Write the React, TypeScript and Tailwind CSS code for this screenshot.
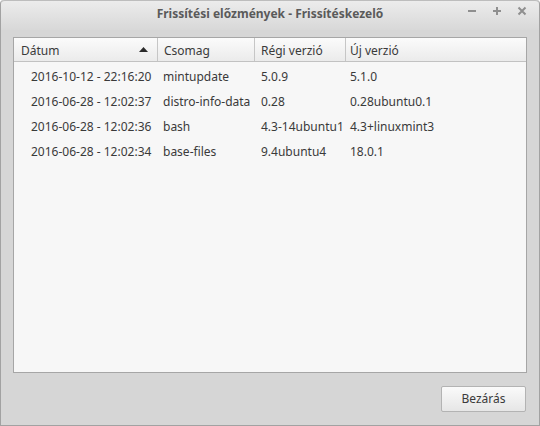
import React from "react";

const rows = [
  ["2016-10-12 - 22:16:20", "mintupdate", "5.0.9", "5.1.0"],
  ["2016-06-28 - 12:02:37", "distro-info-data", "0.28", "0.28ubuntu0.1"],
  ["2016-06-28 - 12:02:36", "bash", "4.3-14ubuntu1", "4.3+linuxmint3"],
  ["2016-06-28 - 12:02:34", "base-files", "9.4ubuntu4", "18.0.1"],
];

export default function App() {
  return (
    <div
      className="w-[540px] h-[426px] flex flex-col bg-[#d6d6d6] border border-t-0 border-[#a2a2a2] rounded-t-[4px] overflow-hidden text-[12px] text-[#3a3a3a]"
      style={{ fontFamily: '"Noto Sans", "Open Sans", sans-serif' }}
    >
      <div className="h-[30px] shrink-0 relative flex items-center justify-center bg-gradient-to-b from-[#ececec] to-[#d8d8d8] border-t border-[#bdbdbd] rounded-t-[4px]">
        <span className="font-bold text-[12px] text-[#5a5a5a] pb-[3px]">
          Frissítési előzmények - Frissítéskezelő
        </span>
        <div className="absolute right-[12px] top-[5px] flex items-center gap-[15px] text-[#8a8a8a] font-bold">
          <svg width="10" height="10" viewBox="0 0 10 10">
            <rect x="1" y="4" width="8" height="2" fill="#8f8f8f" />
          </svg>
          <svg width="10" height="10" viewBox="0 0 10 10">
            <rect x="1" y="4" width="8" height="2" fill="#8f8f8f" />
            <rect x="4" y="1" width="2" height="8" fill="#8f8f8f" />
          </svg>
          <svg width="10" height="10" viewBox="0 0 10 10">
            <path d="M1.5 1.5 L8.5 8.5 M8.5 1.5 L1.5 8.5" stroke="#8f8f8f" strokeWidth="2" />
          </svg>
        </div>
      </div>
      <div className="flex-1 flex flex-col px-[12px] pt-[7px] pb-[13px]">
        <div className="h-[336px] bg-[#f7f7f7] border border-[#a6a6a6] flex flex-col">
          <div className="h-[24px] flex bg-gradient-to-b from-[#fbfbfb] to-[#ebebeb] border-b border-[#c2c2c2]">
            <div className="w-[144px] flex items-center justify-between pl-[7px] pr-[9px] pt-[3px] border-r border-[#c6c6c6]">
              <span>Dátum</span>
              <svg width="9" height="5" viewBox="0 0 9 5" className="-mt-[3px]">
                <path d="M0 5 L4.5 0 L9 5 Z" fill="#2a2a2a" />
              </svg>
            </div>
            <div className="w-[97px] flex items-center pl-[6px] pt-[3px] border-r border-[#c6c6c6]">Csomag</div>
            <div className="w-[91px] flex items-center pl-[6px] pt-[3px] border-r border-[#c6c6c6]">Régi verzió</div>
            <div className="flex-1 flex items-center pl-[4px] pt-[3px]">Új verzió</div>
          </div>
          {rows.map((r) => (
            <div key={r[0]} className="h-[25px] flex items-center pt-[4px]">
              <div className="w-[144px] pl-[17px] whitespace-nowrap">{r[0]}</div>
              <div className="w-[97px] pl-[5px] whitespace-nowrap">{r[1]}</div>
              <div className="w-[91px] pl-[6px] whitespace-nowrap">{r[2]}</div>
              <div className="flex-1 pl-[4px] whitespace-nowrap">{r[3]}</div>
            </div>
          ))}
        </div>
        <div className="flex justify-end mt-[13px] pr-[1px]">
          <button className="w-[85px] h-[26px] rounded-[2px] border border-[#b3b3b3] bg-gradient-to-b from-[#fafafa] to-[#e6e6e6] text-[#3a3a3a] text-[12px] flex items-center justify-center">
            Bezárás
          </button>
        </div>
      </div>
    </div>
  );
}
